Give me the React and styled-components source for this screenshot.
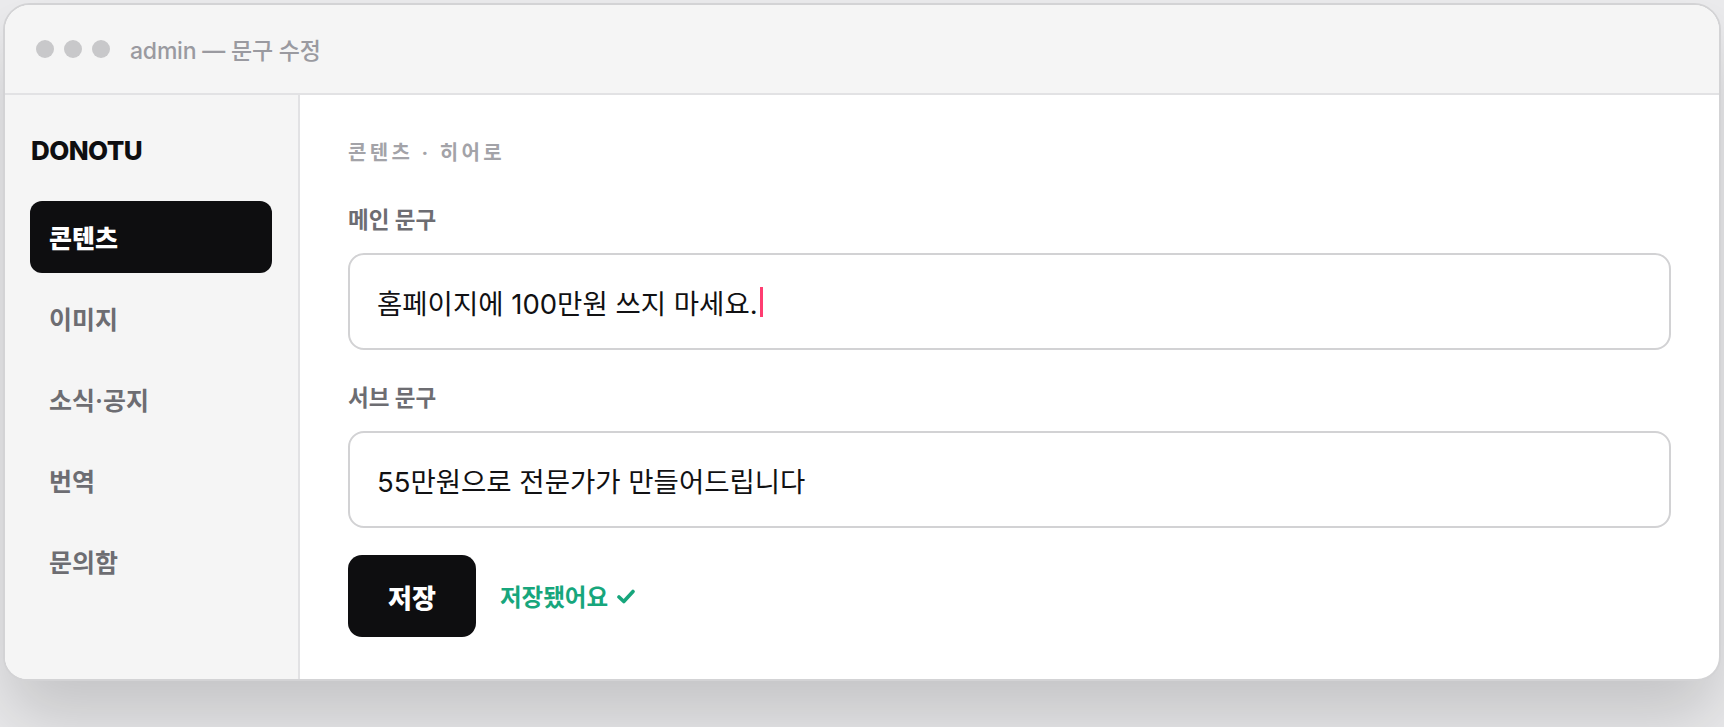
import React from 'react'
import styled, { createGlobalStyle } from 'styled-components'

const GlobalStyle = createGlobalStyle`
  * { box-sizing: border-box; }
  html, body {
    margin: 0;
    padding: 0;
    background: #ececee;
    font-family: "Inter", "Noto Sans CJK KR", sans-serif;
  }
`

const Page = styled.div`
  width: 1724px;
  height: 727px;
  padding: 3px;
  overflow: hidden;
`

const Window = styled.div`
  width: 1718px;
  height: 678px;
  display: flex;
  flex-direction: column;
  background: #fff;
  border: 2px solid #d3d3d5;
  border-radius: 27px 27px 24px 24px;
  box-shadow: 0 40px 70px rgba(0, 0, 0, 0.17);
  overflow: hidden;
`

const TitleBar = styled.header`
  height: 90px;
  flex-shrink: 0;
  display: flex;
  align-items: center;
  gap: 20px;
  padding-left: 31px;
  background: #f5f5f5;
  border-bottom: 2px solid #e2e2e4;
`

const Dots = styled.div`
  display: flex;
  gap: 10px;
`

const Dot = styled.span`
  width: 18px;
  height: 18px;
  border-radius: 50%;
  background: #c8c8ca;
`

const WindowTitle = styled.span`
  font-size: 23px;
  font-weight: 500;
  color: #9a9aa0;
  letter-spacing: -0.2px;
`

const Body = styled.div`
  flex: 1;
  display: flex;
  min-height: 0;
`

const Sidebar = styled.nav`
  width: 295px;
  flex-shrink: 0;
  display: flex;
  flex-direction: column;
  padding: 41px 26px 0 25px;
  background: #f5f5f5;
  border-right: 2px solid #e2e2e4;
`

const Logo = styled.div`
  font-size: 26px;
  line-height: 30px;
  font-weight: 800;
  color: #0e0e10;
  letter-spacing: -0.6px;
  padding-left: 1px;
  margin-bottom: 35px;
`

const NavList = styled.div`
  display: flex;
  flex-direction: column;
  gap: 9px;
`

const NavItem = styled.div`
  height: 72px;
  display: flex;
  align-items: center;
  padding-left: 19px;
  border-radius: 12px;
  font-size: 25px;
  font-weight: ${p => (p.$active ? 800 : 600)};
  color: ${p => (p.$active ? '#ffffff' : '#6d6d72')};
  background: ${p => (p.$active ? '#0e0e10' : 'transparent')};
`

const Main = styled.main`
  flex: 1;
  display: flex;
  flex-direction: column;
  padding: 46px 48px 0 48px;
`

const Breadcrumb = styled.div`
  font-size: 20px;
  line-height: 25px;
  font-weight: 700;
  color: #a3a3a8;
  letter-spacing: 3.4px;
  margin-bottom: 40px;
`

const Field = styled.div`
  display: flex;
  flex-direction: column;
  gap: 19px;
  margin-bottom: ${p => p.$space || '34px'};
`

const Label = styled.div`
  font-size: 22.5px;
  line-height: 28px;
  font-weight: 700;
  color: #6d6d72;
`

const InputBox = styled.div`
  height: 97px;
  display: flex;
  align-items: center;
  padding-left: 27px;
  border: 2px solid #d2d2d4;
  border-radius: 16px;
  background: #fff;
  font-size: 27.5px;
  font-weight: 400;
  color: #111113;
`

const Caret = styled.span`
  display: inline-block;
  width: 3px;
  height: 30px;
  margin-left: 2px;
  background: #ff3d71;
`

const Actions = styled.div`
  display: flex;
  align-items: center;
  gap: 24px;
`

const SaveButton = styled.button`
  width: 128px;
  height: 82px;
  border: none;
  border-radius: 14px;
  background: #0e0e10;
  color: #fff;
  font-family: inherit;
  font-size: 26px;
  font-weight: 800;
  cursor: pointer;
`

const Status = styled.span`
  display: flex;
  align-items: center;
  gap: 9px;
  font-size: 23.5px;
  font-weight: 700;
  color: #17a67c;
`

const Check = () => (
  <svg width="18" height="15" viewBox="0 0 18 15" fill="none">
    <path d="M2 8 L6.8 12.5 L16 2.5" stroke="#17a67c" strokeWidth="3.6" strokeLinecap="round" strokeLinejoin="round" />
  </svg>
)

const navItems = ['콘텐츠', '이미지', '소식·공지', '번역', '문의함']

const App = () => {
  return (
    <Page>
      <GlobalStyle />
      <Window>
        <TitleBar>
          <Dots>
            <Dot />
            <Dot />
            <Dot />
          </Dots>
          <WindowTitle>admin — 문구 수정</WindowTitle>
        </TitleBar>
        <Body>
          <Sidebar>
            <Logo>DONOTU</Logo>
            <NavList>
              {navItems.map((item, i) => (
                <NavItem key={item} $active={i === 0}>{item}</NavItem>
              ))}
            </NavList>
          </Sidebar>
          <Main>
            <Breadcrumb>콘텐츠 · 히어로</Breadcrumb>
            <Field>
              <Label>메인 문구</Label>
              <InputBox>
                홈페이지에 100만원 쓰지 마세요.<Caret />
              </InputBox>
            </Field>
            <Field $space="27px">
              <Label>서브 문구</Label>
              <InputBox>55만원으로 전문가가 만들어드립니다</InputBox>
            </Field>
            <Actions>
              <SaveButton>저장</SaveButton>
              <Status>
                저장됐어요 <Check />
              </Status>
            </Actions>
          </Main>
        </Body>
      </Window>
    </Page>
  )
}

export default App
